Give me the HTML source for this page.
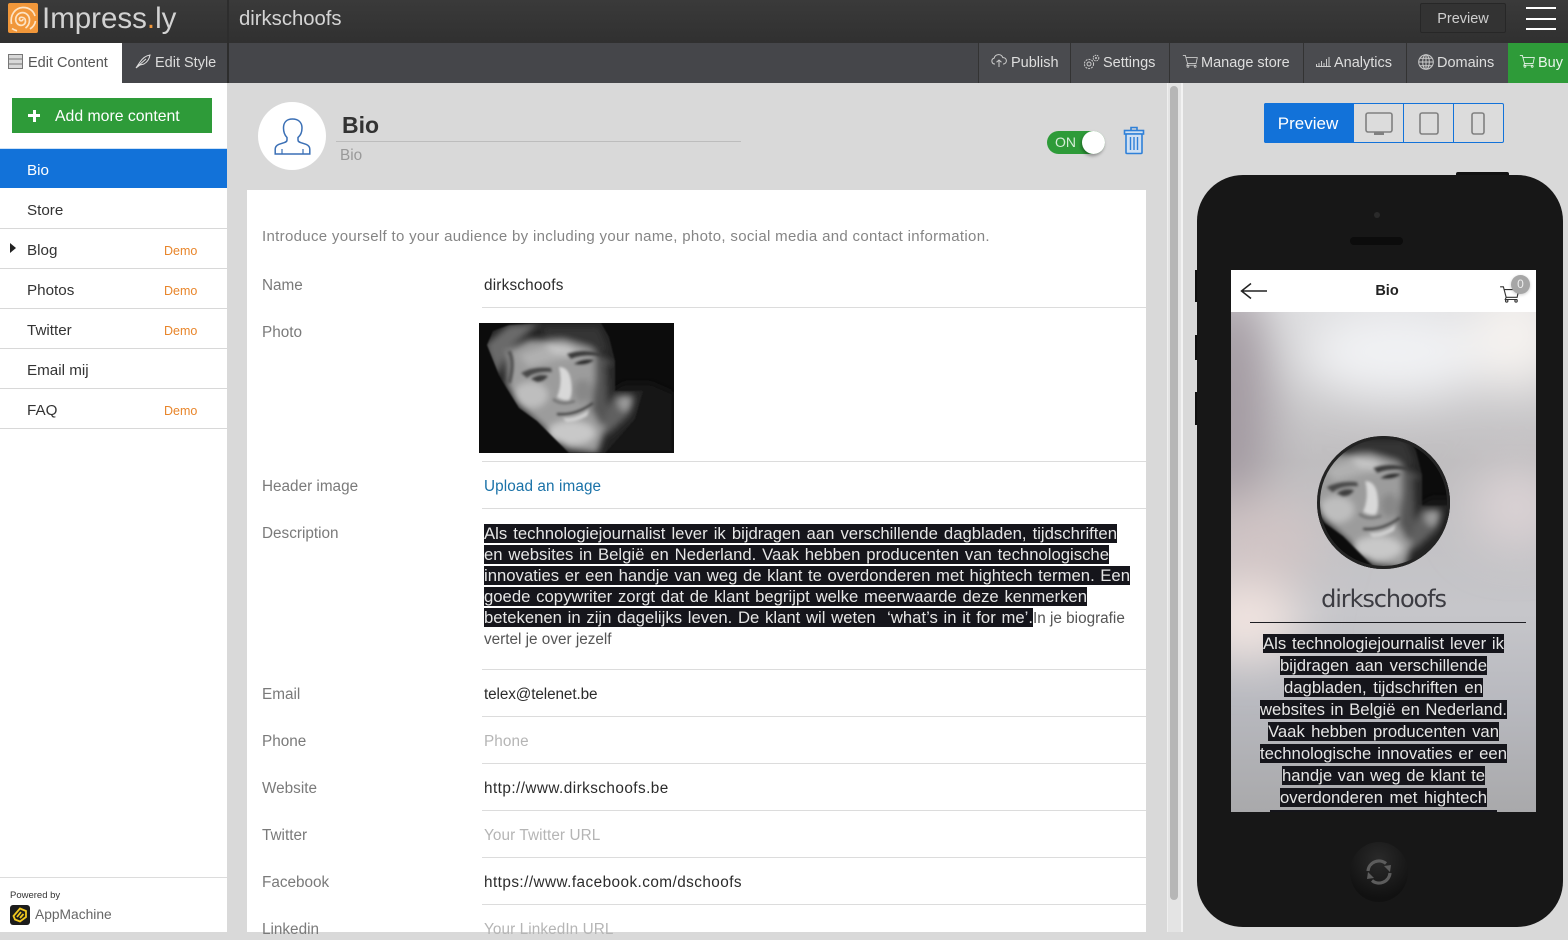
<!DOCTYPE html>
<html><head><meta charset="utf-8"><title>Impress.ly</title>
<style>
*{box-sizing:border-box}
html,body{margin:0;padding:0}
body{position:relative;width:1568px;height:932px;overflow:hidden;background:#d9d9d9;font-family:"Liberation Sans",sans-serif;color:#333}
.a,.t{position:absolute}
.t{white-space:nowrap;line-height:20px}
.top{left:0;top:0;width:1568px;height:43px;background:linear-gradient(#3a3a3a,#303030)}
.bar{left:0;top:43px;width:1568px;height:40px;background:#45464a}
.tb{position:absolute;top:43px;height:40px;border-left:1px solid #333;color:#dedede;font-size:14.5px;line-height:40px;white-space:nowrap;background:#4a4b4f}
.tb svg{position:absolute;top:11px}
.tb span{position:absolute;top:0}
.side{left:0;top:83px;width:227px;height:849px;background:#fff}
.mi{position:absolute;left:0;width:227px;height:40px;border-bottom:1px solid #d8d8d8;font-size:15.2px;line-height:43px;padding-left:27px;color:#333}
.mi b{position:absolute;left:164px;top:1px;font-weight:normal;font-size:12.5px;color:#e8852a}
.lab{left:262px;font-size:15.3px;color:#7a7a7a}
.val{left:484px;font-size:15.3px;color:#2b2b2b}
.ph{left:484px;font-size:15.3px;color:#b5b5b5;letter-spacing:.1px}
.ln{position:absolute;left:482px;width:664px;height:1px;background:#dcdcdc}
.d{position:absolute;left:484px;height:19px;line-height:20px;background:#15151b;color:#e6e6e6;font-size:16.7px;white-space:nowrap;text-align:justify;text-align-last:justify;overflow:hidden}
.p{position:absolute;height:19px;line-height:20px;background:#15151b;color:#e6e6e6;font-size:16.7px;white-space:nowrap;text-align:justify;text-align-last:justify;overflow:hidden}
</style></head><body>

<svg width="0" height="0" style="position:absolute"><defs>
<filter id="b0" x="-5%" y="-5%" width="110%" height="110%"><feGaussianBlur stdDeviation=".7"/></filter>
<filter id="b1" x="-20%" y="-20%" width="140%" height="140%"><feGaussianBlur stdDeviation="1.1"/></filter>
<filter id="b2" x="-20%" y="-20%" width="140%" height="140%"><feGaussianBlur stdDeviation="3.5"/></filter>
<filter id="b3" x="-50%" y="-50%" width="200%" height="200%"><feGaussianBlur stdDeviation="24"/></filter>
<clipPath id="hc"><path d="M8 22 L14 8 L30 2 L60 0 L122 0 L130 14 L136 38 L136 68 L164 68 L156 96 L126 130 L90 130 L80 120 L58 98 L40 85 L27 64 L20 52 Z"/></clipPath>
<symbol id="face" viewBox="0 0 195 130">
<rect width="195" height="130" fill="#0c0c0c"/>
<g filter="url(#b2)"><path d="M125 72 L145 60 L172 60 L195 70 V130 H120 Z" fill="#131313"/></g>
<g filter="url(#b0)"><g clip-path="url(#hc)">
<rect width="195" height="130" fill="#242424"/>
<g filter="url(#b2)">
<path d="M18 54 L6 22 L30 2 L60 0 L30 26Z" fill="#6a6a6a"/>
<path d="M60 4 L120 4 L130 30 L112 24 L70 14Z" fill="#363636"/>
<path d="M28 28 L50 17 L85 17 L112 25 L124 36 L132 60 L132 74 L125 110 L118 130 L88 126 L60 100 L40 82 L28 62Z" fill="#9c9c9c"/>
<path d="M40 32 L70 22 L100 26 L104 34 L80 36 L50 44Z" fill="#b0b0b0"/>
<path d="M66 20 L92 24 L94 32 L74 30Z" fill="#c8c8c8"/>
<ellipse cx="52" cy="72" rx="17" ry="13" fill="#bebebe"/>
<path d="M116 30 L136 40 L136 76 L122 104 L112 86 L116 56Z" fill="#565656"/>
<path d="M126 40 L136 40 L136 74 L128 84Z" fill="#2a2a2a"/>
<ellipse cx="104" cy="68" rx="9" ry="12" fill="#888"/>
<ellipse cx="92" cy="110" rx="24" ry="12" fill="#c8c8c8"/>
<path d="M136 72 L156 72 L150 92 L128 112 L124 100Z" fill="#606060"/>
<ellipse cx="146" cy="80" rx="7" ry="8" fill="#9a9a9a"/>
</g>
<g filter="url(#b1)">
<path d="M80 44 Q90 44 92 58 Q94 72 90 77 Q84 78 78 74 Q84 60 80 44Z" fill="#d8d8d8"/>
<path d="M42 50 Q54 43 72 45 L73 49 Q56 48 48 55Z" fill="#4a4a4a"/>
<path d="M52 56 Q60 50 69 53 Q65 59 58 59Z" fill="#3c3c3c"/>
<path d="M88 31 Q104 25 122 31 L121 33 Q104 31 92 36Z" fill="#3a3a3a"/>
<path d="M95 41 Q104 35 115 37 Q108 43 95 41Z" fill="#2c2c2c"/>
<path d="M74 76 Q82 83 96 78" stroke="#777" stroke-width="3" fill="none"/>
<path d="M78 91 Q96 93 114 80" stroke="#3a3a3a" stroke-width="2.200" fill="none"/>
<path d="M84 95 Q96 96 110 87 L108 93 Q96 100 87 99Z" fill="#d0d0d0"/>
<path d="M30 28 Q36 40 30 60" stroke="#555" stroke-width="4" fill="none"/>
</g>
</g></g>
</symbol>
<symbol id="cart" viewBox="0 0 20 16"><path d="M1 1.5h3l2.500 9.500h10l1.500-7H5" fill="none" stroke="currentColor" stroke-width="1"/><path d="M6.500 11l-.8 2h11" fill="none" stroke="currentColor" stroke-width="1"/><circle cx="7" cy="14.300" r="1.100" fill="none" stroke="currentColor"/><circle cx="15.500" cy="14.300" r="1.100" fill="none" stroke="currentColor"/></symbol>
</defs></svg>

<!-- top bars -->
<div class="a top"></div>
<div class="a bar"></div>
<div class="a" style="left:227px;top:0;width:2px;height:83px;background:#2d2d2d"></div>
<svg class="a" style="left:8px;top:3px" width="30" height="30" viewBox="0 0 30 30"><rect width="30" height="30" rx="2" fill="#f1973a"/><g fill="none" stroke="#fde3c4" stroke-width="1.700"><path d="M15 16a1.800 1.800 0 1 1-1.800-1.800c2.600 0 4.300 1.600 4.300 4s-2 4.200-4.500 4.200-5.300-2.400-5.300-6 3-6.800 6.800-6.800 7 3.200 7 7.500-2 6.500-4 8"/><path d="M3.500 21C1.800 12 7 5 14.500 4.500c6-.4 11 3 12.500 8.500M4 25.500c2 1.500 3.500 2 5 2.300M22 26c3-2 5-4.500 5.500-8"/></g></svg>
<div class="t" style="left:42px;top:1px;font-size:29.500px;line-height:36px;color:#d2d2d2">Impress<span style="color:#f1973a">.</span>ly</div>
<div class="t" style="left:239px;top:9px;font-size:20.300px;color:#d4d4d4">dirkschoofs</div>
<div class="a" style="left:1420px;top:3px;width:86px;height:30px;background:#333;border:1px solid #272727;border-radius:2px;color:#cfcfcf;font-size:14.500px;line-height:31px;text-align:center">Preview</div>
<div class="a" style="left:1526px;top:7px;width:30px;height:2px;background:#fff"></div>
<div class="a" style="left:1526px;top:18px;width:30px;height:2px;background:#fff"></div>
<div class="a" style="left:1526px;top:28px;width:30px;height:2px;background:#fff"></div>

<div class="a" style="left:0;top:43px;width:122px;height:40px;background:#fff"></div>
<svg class="a" style="left:8px;top:54px" width="15" height="15" viewBox="0 0 15 15"><rect x=".5" y=".5" width="14" height="14" fill="#d8d8d8" stroke="#777"/><path d="M0 5h15M0 10h15" stroke="#777"/></svg>
<div class="t" style="left:28px;top:53px;font-size:14.500px;color:#555">Edit Content</div>
<svg class="a" style="left:135px;top:54px" width="16" height="15" viewBox="0 0 16 15"><path d="M1 14 L5 8 Q9 2 15 1 Q14 7 9 10 L5 11Z M3 12 L11 5" fill="none" stroke="#ddd" stroke-width="1"/></svg>
<div class="t" style="left:155px;top:53px;font-size:14.500px;color:#dcdcdc">Edit Style</div>

<div class="tb" style="left:978px;width:92px"><svg style="left:12px" width="16" height="14" viewBox="0 0 16 14"><path d="M4 10H3.500a3 3 0 0 1-.3-5.900 4.500 4.500 0 0 1 8.600-.5 3.200 3.200 0 0 1 .7 6.400H12M8 13V6M5.500 8.300 8 6l2.500 2.300" fill="none" stroke="#ccc"/></svg><span style="left:32px">Publish</span></div>
<div class="tb" style="left:1070px;width:99px"><svg style="left:12px" width="17" height="16" viewBox="0 0 17 16"><circle cx="6" cy="10" r="4.600" fill="none" stroke="#ccc" stroke-dasharray="2 1"/><circle cx="6" cy="10" r="2" fill="none" stroke="#ccc"/><circle cx="13" cy="4" r="2.800" fill="none" stroke="#ccc" stroke-dasharray="1.500 .8"/><circle cx="13" cy="4" r="1" fill="#ccc"/></svg><span style="left:32px">Settings</span></div>
<div class="tb" style="left:1169px;width:134px"><svg style="left:12px;color:#ccc" width="17" height="14"><use href="#cart" width="17" height="14"/></svg><span style="left:31px">Manage store</span></div>
<div class="tb" style="left:1303px;width:103px"><svg style="left:12px;top:13px" width="15" height="11" viewBox="0 0 15 11"><path d="M.5 11V8M3 11V7M5.500 11V5M8 11V7M10.500 11V3M13 11V1M0 10.500h15" stroke="#ccc" fill="none"/></svg><span style="left:30px">Analytics</span></div>
<div class="tb" style="left:1406px;width:102px"><svg style="left:11px" width="16" height="16" viewBox="0 0 16 16"><g fill="none" stroke="#ccc"><circle cx="8" cy="8" r="7.300"/><ellipse cx="8" cy="8" rx="3.300" ry="7.300"/><path d="M8 .7v14.600M.7 8h14.600M1.800 4.300h12.400M1.800 11.700h12.400"/></g></svg><span style="left:30px">Domains</span></div>
<div class="tb" style="left:1508px;width:60px;background:#2e9b39;border-left:0;color:#eaf5eb"><svg style="left:11px;color:#eaf5eb" width="17" height="14"><use href="#cart" width="17" height="14"/></svg><span style="left:30px">Buy</span></div>

<!-- sidebar -->
<div class="a side"></div>
<div class="a" style="left:12px;top:98px;width:200px;height:35px;background:#2e9b39"></div>
<div class="a" style="left:28px;top:114px;width:12px;height:3px;background:#fff"></div>
<div class="a" style="left:32.500px;top:110px;width:3px;height:12px;background:#fff"></div>
<div class="t" style="left:55px;top:106px;font-size:15.800px;color:#fff;line-height:22px">Add more content</div>
<div class="a" style="left:0;top:148px;width:227px;height:1px;background:#cfe2f6"></div>
<div class="mi" style="top:149px;height:39px;background:#1272d9;color:#fff;border:0">Bio</div>
<div class="mi" style="top:189px">Store</div>
<div class="mi" style="top:229px">Blog<b>Demo</b></div>
<div class="a" style="left:10px;top:243px;width:0;height:0;border-left:6px solid #222;border-top:5px solid transparent;border-bottom:5px solid transparent"></div>
<div class="mi" style="top:269px">Photos<b>Demo</b></div>
<div class="mi" style="top:309px">Twitter<b>Demo</b></div>
<div class="mi" style="top:349px">Email mij</div>
<div class="mi" style="top:389px">FAQ<b>Demo</b></div>
<div class="a" style="left:0;top:877px;width:227px;height:1px;background:#dcdcdc"></div>
<div class="t" style="left:10px;top:886px;font-size:9.500px;color:#333">Powered by</div>
<svg class="a" style="left:10px;top:905px" width="20" height="20" viewBox="0 0 20 20"><rect width="20" height="20" rx="3" fill="#1c1c1c"/><g fill="none" stroke="#f2c81e" stroke-width="1.800"><path d="M3.500 11 L10 3.500 L16 6 L16 12 L10 16.500 L5 14.500Z"/><path d="M7 12 L11 7M10 13 L13.500 9"/></g></svg>
<div class="t" style="left:35px;top:905px;font-size:13.800px;color:#666">AppMachine</div>

<!-- header of main -->
<div class="a" style="left:258px;top:102px;width:68px;height:68px;border-radius:50%;background:#fff"></div>
<svg class="a" style="left:274px;top:118px" width="37" height="37" viewBox="0 0 37 37"><path d="M9.500 10C9.500 4 13 1 18.500 1S28 4 28 10c0 4.500-1.500 7.500-4 9.500v2.500c0 1.500 1 2 3 2.700l5 1.600c2.500 1 3.800 2.500 3.800 5V36H1.200v-4.700c0-2.500 1.300-4 3.800-5l5-1.600c2-.7 3-1.200 3-2.700v-2.500C11 17.500 9.500 14.500 9.500 10z" fill="none" stroke="#3a6fb5" stroke-width="1.500"/><path d="M8 36v-5M29 36v-5" stroke="#3a6fb5" stroke-width="1.200"/></svg>
<div class="t" style="left:342px;top:112px;font-size:23px;line-height:27px;font-weight:bold;color:#333">Bio</div>
<div class="a" style="left:336px;top:141px;width:405px;height:1px;background:#bdbdbd"></div>
<div class="t" style="left:340px;top:146px;font-size:15.300px;color:#999">Bio</div>
<div class="a" style="left:1047px;top:131px;width:58px;height:23px;border-radius:12px;background:#2e9b39"></div>
<div class="t" style="left:1055px;top:132px;font-size:14px;color:#d6edd8">ON</div>
<div class="a" style="left:1082px;top:131px;width:23px;height:23px;border-radius:50%;background:#fff;box-shadow:-1px 2px 3px rgba(0,0,0,.35)"></div>
<svg class="a" style="left:1123px;top:126px" width="22" height="29" viewBox="0 0 22 29"><g fill="#cfe0f3" stroke="#2f80d8" stroke-width="1.600"><path d="M8 4V1.500h6V4" fill="none"/><rect x="1.500" y="4.500" width="19" height="3.500"/><rect x="3" y="8" width="16" height="19.500" rx="1"/></g><path d="M7.500 11v13M11 11v13M14.500 11v13" stroke="#2f80d8" stroke-width="1.400"/></svg>

<!-- card -->
<div class="a" style="left:247px;top:190px;width:899px;height:742px;background:#fff"></div>
<div class="t" style="left:262px;top:227px;font-size:15px;color:#858585;letter-spacing:.32px">Introduce yourself to your audience by including your name, photo, social media and contact information.</div>

<div class="t lab" style="top:276px">Name</div><div class="t val" style="top:276px;letter-spacing:.2px">dirkschoofs</div>
<div class="ln" style="top:307px"></div>
<div class="t lab" style="top:323px">Photo</div>
<svg class="a" style="left:479px;top:323px" width="195" height="130"><use href="#face" width="195" height="130"/></svg>
<div class="ln" style="top:461px"></div>
<div class="t lab" style="top:477px">Header image</div><div class="t val" style="top:477px;color:#1a72a8;letter-spacing:.1px">Upload an image</div>
<div class="ln" style="top:508px"></div>
<div class="t lab" style="top:524px">Description</div>
<div class="d" style="top:524px;width:633px">Als technologiejournalist lever ik bijdragen aan verschillende dagbladen, tijdschriften</div>
<div class="d" style="top:545px;width:625px">en websites in België en Nederland. Vaak hebben producenten van technologische</div>
<div class="d" style="top:566px;width:646px">innovaties er een handje van weg de klant te overdonderen met hightech termen. Een</div>
<div class="d" style="top:587px;width:603px">goede copywriter zorgt dat de klant begrijpt welke meerwaarde deze kenmerken</div>
<div class="d" style="top:608px;width:549px">betekenen in zijn dagelijks leven. De klant wil weten &nbsp;‘what’s in it for me’.</div>
<div class="t" style="left:1033px;top:609px;font-size:15.300px;color:#555">In je biografie</div>
<div class="t" style="left:484px;top:630px;font-size:15.300px;color:#555">vertel je over jezelf</div>
<div class="ln" style="top:669px"></div>
<div class="t lab" style="top:685px">Email</div><div class="t val" style="top:685px;letter-spacing:-.1px">telex@telenet.be</div>
<div class="ln" style="top:716px"></div>
<div class="t lab" style="top:732px">Phone</div><div class="t ph" style="top:732px">Phone</div>
<div class="ln" style="top:763px"></div>
<div class="t lab" style="top:779px">Website</div><div class="t val" style="top:779px;letter-spacing:.45px">http://www.dirkschoofs.be</div>
<div class="ln" style="top:810px"></div>
<div class="t lab" style="top:826px">Twitter</div><div class="t ph" style="top:826px">Your Twitter URL</div>
<div class="ln" style="top:857px"></div>
<div class="t lab" style="top:873px">Facebook</div><div class="t val" style="top:873px;letter-spacing:.45px">https://www.facebook.com/dschoofs</div>
<div class="ln" style="top:904px"></div>
<div class="t lab" style="top:920px">Linkedin</div><div class="t ph" style="top:920px">Your LinkedIn URL</div>

<!-- scrollbar -->
<div class="a" style="left:1167px;top:83px;width:14px;height:849px;background:#e4e4e4;border-left:1px solid #efefef"></div>
<div class="a" style="left:1181px;top:83px;width:2px;height:849px;background:#f3f3f3"></div>
<div class="a" style="left:1170px;top:86px;width:8px;height:814px;border-radius:4px;background:#b6b6b6"></div>

<!-- preview segmented -->
<div class="a" style="left:1264px;top:103px;width:240px;height:40px;border:1px solid #1272d9;border-radius:2px;background:#dcdcdc"></div>
<div class="a" style="left:1264px;top:103px;width:90px;height:40px;background:#1272d9;border-radius:2px 0 0 2px;color:#fff;font-size:17px;line-height:41px;text-align:center;text-indent:-2px">Preview</div>
<div class="a" style="left:1403px;top:103px;width:1px;height:40px;background:#1272d9"></div>
<div class="a" style="left:1453px;top:103px;width:1px;height:40px;background:#1272d9"></div>
<svg class="a" style="left:1365px;top:112px" width="28" height="23" viewBox="0 0 28 23"><rect x="1" y="1" width="26" height="19" rx="2" fill="none" stroke="#808080" stroke-width="1.600"/><rect x="9" y="20" width="10" height="3" fill="#808080"/></svg>
<svg class="a" style="left:1419px;top:112px" width="20" height="23" viewBox="0 0 20 23"><rect x="1" y="1" width="18" height="21" rx="2" fill="none" stroke="#808080" stroke-width="1.600"/></svg>
<svg class="a" style="left:1471px;top:112px" width="14" height="23" viewBox="0 0 14 23"><rect x="1" y="1" width="12" height="21" rx="2" fill="none" stroke="#808080" stroke-width="1.600"/></svg>

<!-- phone -->
<div class="a" style="left:1456px;top:172px;width:53px;height:6px;background:#111;border-radius:2px 2px 0 0"></div>
<div class="a" style="left:1195px;top:270px;width:4px;height:32px;background:#0f0f0f"></div>
<div class="a" style="left:1195px;top:335px;width:4px;height:25px;background:#0f0f0f"></div>
<div class="a" style="left:1195px;top:392px;width:4px;height:33px;background:#0f0f0f"></div>
<div class="a" style="left:1197px;top:175px;width:366px;height:752px;border-radius:46px;background:#171717"></div>
<div class="a" style="left:1374px;top:212px;width:6px;height:6px;border-radius:50%;background:#2a2a2a"></div>
<div class="a" style="left:1350px;top:237px;width:53px;height:8px;border-radius:4px;background:#0c0c0c"></div>
<div class="a" style="left:1350px;top:842px;width:58px;height:60px;border-radius:50%;background:radial-gradient(circle at 50% 30%,#2a2a2a,#111 75%)"></div>
<svg class="a" style="left:1364px;top:857px" width="30" height="30" viewBox="0 0 30 30"><g fill="none" stroke="#5c5c5c" stroke-width="3.200"><path d="M4 14a11 11 0 0 1 18-7.500"/><path d="M26 16a11 11 0 0 1-18 7.500"/></g><path d="M20 9l7-1-1 7zM10 21l-7 1 1-7z" fill="#5c5c5c"/></svg>

<div class="a" style="left:1231px;top:270px;width:305px;height:542px;overflow:hidden;background:#fff">
  <svg class="a" style="left:0;top:42px" width="305" height="500" viewBox="0 0 305 500">
    <defs><linearGradient id="bgv" x1="0" y1="0" x2="0" y2="1"><stop offset="0" stop-color="#dcdcde"/><stop offset=".3" stop-color="#bfbdbf"/><stop offset=".6" stop-color="#c6c6ca"/><stop offset=".78" stop-color="#b8b9bf"/><stop offset="1" stop-color="#a9a9ab"/></linearGradient></defs>
    <rect width="305" height="500" fill="url(#bgv)"/>
    <g filter="url(#b3)">
      <ellipse cx="165" cy="40" rx="95" ry="45" fill="#f1f2f4"/>
      <ellipse cx="285" cy="25" rx="45" ry="50" fill="#f6f3f0"/>
      <ellipse cx="0" cy="90" rx="38" ry="120" fill="#a299a0"/>
      <ellipse cx="30" cy="230" rx="60" ry="48" fill="#d0c4c5"/>
      <ellipse cx="285" cy="195" rx="45" ry="40" fill="#dcd3d5"/>
      <ellipse cx="15" cy="310" rx="55" ry="38" fill="#f2e5e1"/>
    </g>
  </svg>
  <svg class="a" style="left:0;top:0" width="305" height="42"><path d="M36 21H11M20 13.500 L10.500 21 L20 28.500" fill="none" stroke="#222" stroke-width="1.500"/></svg>
  <div class="t" style="left:0;width:312px;top:10px;text-align:center;font-size:14.500px;line-height:22px;font-weight:bold;color:#222">Bio</div>
  <svg class="a" style="left:268px;top:15px;color:#333" width="22" height="18"><use href="#cart" width="22" height="18"/></svg>
  <div class="a" style="left:280px;top:5px;width:19px;height:19px;border-radius:50%;background:#a6a6a6;color:#eee;font-size:12px;line-height:19px;text-align:center;box-shadow:0 1px 3px rgba(0,0,0,.2)">0</div>
  <div class="a" style="left:86px;top:166px;width:133px;height:133px;border-radius:50%;overflow:hidden;background:#1c1c1c">
    <svg class="a" style="left:-33px;top:0;filter:blur(.6px)" width="198" height="133"><use href="#face" width="198" height="133"/></svg>
    <div class="a" style="left:0;top:0;width:133px;height:133px;border-radius:50%;border:3px solid #232323"></div>
  </div>
  <div class="t" style="left:0;width:305px;top:314px;line-height:30px;text-align:center;font-size:24px;color:#3c3c42;font-family:'DejaVu Sans','Liberation Sans',sans-serif;letter-spacing:-1.100px">dirkschoofs</div>
  <div class="a" style="left:19px;top:352px;width:276px;height:1px;background:#1d1d22"></div>
  <div class="p" style="left:32px;top:364px;width:241px">Als technologiejournalist lever ik</div>
  <div class="p" style="left:49px;top:386px;width:207px">bijdragen aan verschillende</div>
  <div class="p" style="left:53px;top:408px;width:199px">dagbladen, tijdschriften en</div>
  <div class="p" style="left:29px;top:430px;width:247px">websites in België en Nederland.</div>
  <div class="p" style="left:37px;top:452px;width:231px">Vaak hebben producenten van</div>
  <div class="p" style="left:29px;top:474px;width:247px">technologische innovaties er een</div>
  <div class="p" style="left:51px;top:496px;width:203px">handje van weg de klant te</div>
  <div class="p" style="left:49px;top:518px;width:207px">overdonderen met hightech</div>
  <div class="p" style="left:39px;top:540px;width:227px">termen. Een goede copywriter</div>
</div>
</body></html>
